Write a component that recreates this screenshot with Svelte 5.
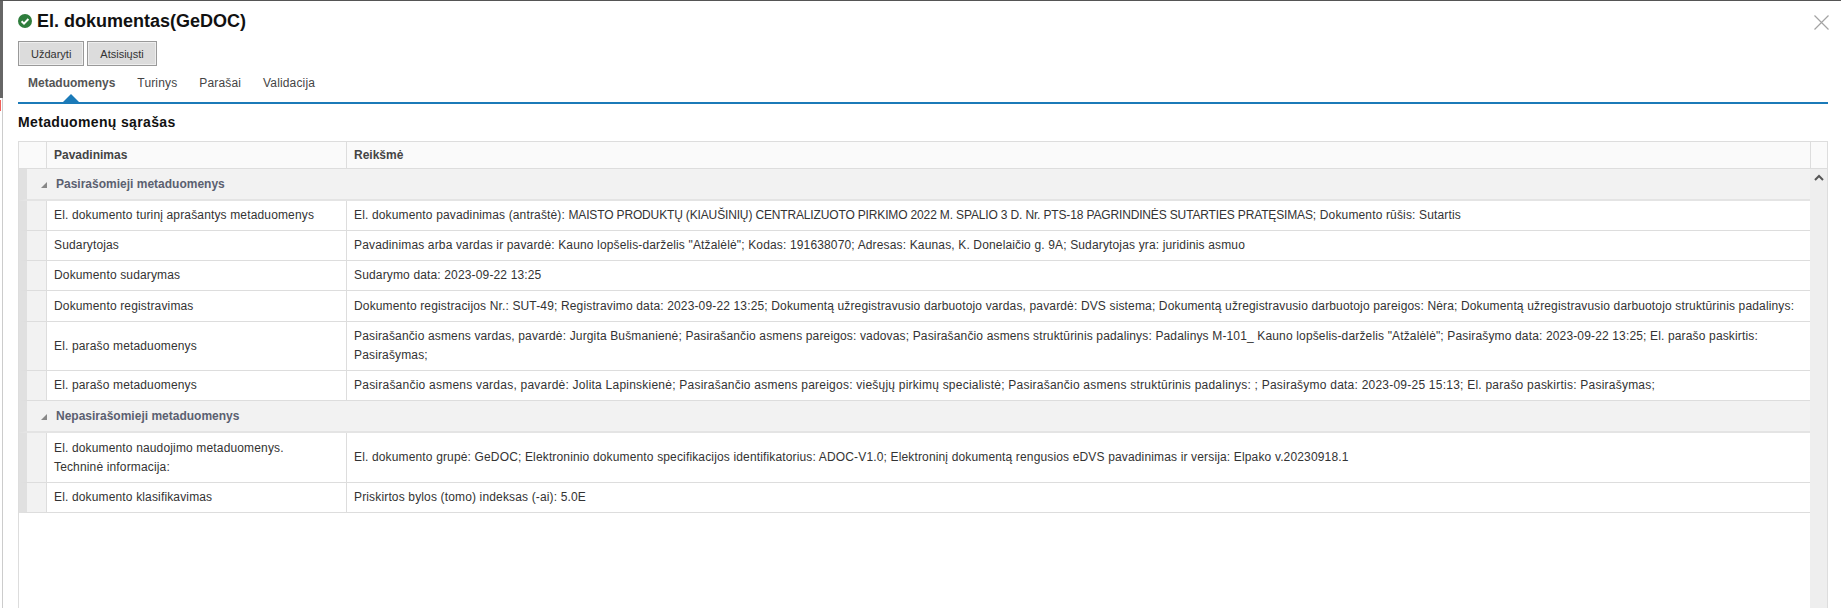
<script>
  const capsPart = /(MAISTO .*PRATĘSIMAS)/;
  const group1 = [
    ['El. dokumento turinį aprašantys metaduomenys', 'El. dokumento pavadinimas (antraštė): MAISTO PRODUKTŲ (KIAUŠINIŲ) CENTRALIZUOTO PIRKIMO 2022 M. SPALIO 3 D. Nr. PTS-18 PAGRINDINĖS SUTARTIES PRATĘSIMAS; Dokumento rūšis: Sutartis', 30],
    ['Sudarytojas', 'Pavadinimas arba vardas ir pavardė: Kauno lopšelis-darželis "Atžalėlė"; Kodas: 191638070; Adresas: Kaunas, K. Donelaičio g. 9A; Sudarytojas yra: juridinis asmuo', 30],
    ['Dokumento sudarymas', 'Sudarymo data: 2023-09-22 13:25', 30],
    ['Dokumento registravimas', 'Dokumento registracijos Nr.: SUT-49; Registravimo data: 2023-09-22 13:25; Dokumentą užregistravusio darbuotojo vardas, pavardė: DVS sistema; Dokumentą užregistravusio darbuotojo pareigos: Nėra; Dokumentą užregistravusio darbuotojo struktūrinis padalinys:', 31],
    ['El. parašo metaduomenys', 'Pasirašančio asmens vardas, pavardė: Jurgita Bušmanienė; Pasirašančio asmens pareigos: vadovas; Pasirašančio asmens struktūrinis padalinys: Padalinys M-101_ Kauno lopšelis-darželis "Atžalėlė"; Pasirašymo data: 2023-09-22 13:25; El. parašo paskirtis: Pasirašymas;', 49],
    ['El. parašo metaduomenys', 'Pasirašančio asmens vardas, pavardė: Jolita Lapinskienė; Pasirašančio asmens pareigos: viešųjų pirkimų specialistė; Pasirašančio asmens struktūrinis padalinys: ; Pasirašymo data: 2023-09-25 15:13; El. parašo paskirtis: Pasirašymas;', 30, 'wide']
  ];
  const group2 = [
    ['El. dokumento naudojimo metaduomenys. Techninė informacija:', 'El. dokumento grupė: GeDOC; Elektroninio dokumento specifikacijos identifikatorius: ADOC-V1.0; Elektroninį dokumentą rengusios eDVS pavadinimas ir versija: Elpako v.20230918.1', 50],
    ['El. dokumento klasifikavimas', 'Priskirtos bylos (tomo) indeksas (-ai): 5.0E', 30]
  ];
  const groups = [
    { title: 'Pasirašomieji metaduomenys', rows: group1, h: 32 },
    { title: 'Nepasirašomieji metaduomenys', rows: group2, h: 32 }
  ];
</script>

<div class="page">
  <span class="edge-mark"></span>
  <div class="dialog">
    <button class="close" aria-label="Uždaryti">
      <svg width="15" height="15" viewBox="0 0 15 15"><path d="M.5.5l14 14M14.5.5l-14 14" stroke="#a3a3a3" stroke-width="1.2" fill="none"/></svg>
    </button>
    <h1>
      <svg width="14" height="14" viewBox="0 0 14 14"><circle cx="7" cy="7" r="7" fill="#2e7d3c"/><path d="M3.6 7.2l2.4 2.4 4.4-4.6" stroke="#fff" stroke-width="2" fill="none"/></svg>
      El. dokumentas(GeDOC)
    </h1>
    <div class="buttons">
      <button class="btn first">Uždaryti</button>
      <button class="btn">Atsisiųsti</button>
    </div>
    <div class="tabs">
      <span class="tab active">Metaduomenys</span>
      <span class="tab">Turinys</span>
      <span class="tab">Parašai</span>
      <span class="tab">Validacija</span>
    </div>
    <h2>Metaduomenų sąrašas</h2>
    <div class="table">
      <div class="thead">
        <div class="corner"></div>
        <div class="th name">Pavadinimas</div>
        <div class="th value">Reikšmė</div>
        <div class="th end"></div>
      </div>
      <div class="tbody">
        <div class="rows">
          {#each groups as g}
            <div class="group" style="height:{g.h}px">
              <span class="arrow"></span>{g.title}
            </div>
            {#each g.rows as r}
              <div class="row" style="height:{r[2]}px">
                <div class="gut"></div>
                <div class="cell name"><span>{r[0]}</span></div>
                <div class="cell value {r[3] ?? ''}"><span>{#each r[1].split(capsPart) as part, i}{#if i % 2}<span class="caps">{part}</span>{:else}{part}{/if}{/each}</span></div>
              </div>
            {/each}
          {/each}
        </div>
        <div class="scroll">
          <svg width="10" height="7" viewBox="0 0 10 7"><path d="M1 6l4-4 4 4" stroke="#555" stroke-width="2" fill="none"/></svg>
        </div>
      </div>
    </div>
  </div>
</div>

<style>
  :global(body) { margin: 0; background: #fff; }
  .page {
    width: 1841px; height: 608px; overflow: hidden; box-sizing: border-box;
    border-top: 1px solid #555;
    font-family: "Liberation Sans", Arial, sans-serif; font-size: 12px; color: #333;
    position: relative;
  }
  .page::before {
    content: ""; position: absolute; left: 0; top: 0; width: 3px; height: 97px; background: #666;
  }
  .page::after {
    content: ""; position: absolute; left: 2px; top: 97px; width: 1px; bottom: 0; background: #ccc;
  }
  .edge-mark { position: absolute; left: 0; top: 99px; width: 1px; height: 11px; background: #f0605a; }
  .dialog { padding: 0 13px 0 18px; position: relative; }
  .close { position: absolute; right: 12px; top: 14px; padding: 0; border: 0; background: none; display: flex; }
  h1 {
    margin: 0; height: 40px; display: flex; align-items: center; gap: 5px;
    font-size: 18px; font-weight: 700; color: #111;
  }
  .buttons { display: flex; gap: 3px; height: 25px; }
  .btn {
    height: 25px; box-sizing: border-box; padding: 0 12px; border: 1px solid #999; background: #dcdcdc;
    font: 11px "Liberation Sans", Arial, sans-serif; color: #333; box-shadow: inset 0 0 0 1px #eee;
  }
  .tabs {
    height: 38px; box-sizing: border-box; border-bottom: 2px solid #1b7ab8; display: flex; gap: 22px;
    padding: 10px 0 0 10px; font-size: 12px; color: #444; letter-spacing: .15px;
  }
  .tab.active { font-weight: 700; color: #555; position: relative; letter-spacing: 0; }
  .tab.active::after {
    content: ""; position: absolute; left: 35px; top: 18px; border: 8px solid transparent; border-top: 0; border-bottom: 8px solid #1b7ab8;
  }
  h2 { margin: 0; height: 37px; padding-bottom: 2px; font-size: 14px; font-weight: 700; color: #111; display: flex; align-items: center; letter-spacing: .35px; box-sizing: border-box; }
  .table { border: 1px solid #ddd; border-bottom: 0; width: 1810px; box-sizing: border-box; }
  .thead { display: flex; height: 27px; box-sizing: border-box; background: #fafafa; border-bottom: 1px solid #ddd; font-weight: 700; color: #444; }
  .corner { width: 27px; flex: none; }
  .th { border-left: 1px solid #ddd; display: flex; align-items: center; padding-left: 7px; box-sizing: border-box; }
  .th.name { width: 300px; flex: none; }
  .th.value { flex: 1; }
  .th.end { width: 17px; flex: none; padding: 0; }
  .tbody { display: flex; height: 450px; }
  .rows { flex: 1; min-width: 0; }
  .group {
    box-sizing: border-box; background: #f2f2f2; border-bottom: 2px solid #e4e4e4; display: flex; align-items: center;
    font-weight: 700; color: #5b6070; padding-left: 14px; border-left: 8px solid #e0e0e0;
  }
  .arrow {
    width: 0; height: 0; border-left: 6px solid transparent; border-bottom: 6px solid #888; margin-right: 9px; margin-top: 2px;
  }
  .row { display: flex; box-sizing: border-box; border-bottom: 1px solid #ddd; border-left: 8px solid #e0e0e0; }
  .gut { width: 19px; flex: none; background: #f2f2f2; }
  .cell { border-left: 1px solid #ddd; box-sizing: border-box; padding: 0 7px; display: flex; align-items: center; line-height: 19px; color: #333; letter-spacing: .15px; }
  .cell.name { width: 300px; flex: none; padding-right: 12px; }
  .cell.value { flex: 1; min-width: 0; }
  .cell.wide { letter-spacing: .23px; }
  .caps { letter-spacing: -.15px; }
  .scroll { width: 17px; flex: none; background: #eee; padding-top: 5px; box-sizing: border-box; }
  .scroll svg { display: block; margin: 0 auto; }
</style>
